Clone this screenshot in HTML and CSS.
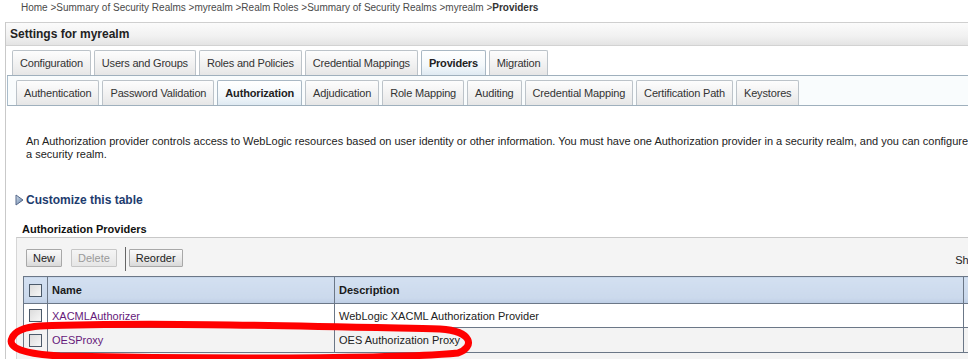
FILE: index.html
```html
<!DOCTYPE html>
<html lang="en">
<head>
    <meta charset="UTF-8">
    <title>Settings for myrealm - Providers</title>
    <link rel="stylesheet" href="styles.css">
</head>
<body>
    <div class="page">
        <div class="breadcrumb">
            Home &gt;Summary of Security Realms &gt;myrealm &gt;Realm Roles &gt;Summary of Security Realms &gt;myrealm &gt;<b>Providers</b>
        </div>

        <div class="panel">
            <div class="panel-title">Settings for myrealm</div>

            <div class="tabs tabs-main">
                <span class="tab">Configuration</span>
                <span class="tab">Users and Groups</span>
                <span class="tab">Roles and Policies</span>
                <span class="tab">Credential Mappings</span>
                <span class="tab active">Providers</span>
                <span class="tab">Migration</span>
            </div>
            <div class="tabs tabs-sub">
                <span class="tab">Authentication</span>
                <span class="tab">Password Validation</span>
                <span class="tab active">Authorization</span>
                <span class="tab">Adjudication</span>
                <span class="tab">Role Mapping</span>
                <span class="tab">Auditing</span>
                <span class="tab">Credential Mapping</span>
                <span class="tab">Certification Path</span>
                <span class="tab">Keystores</span>
            </div>

            <div class="panel-body">
                <p class="intro">
                    An Authorization provider controls access to WebLogic resources based on user identity or other information. You must have one Authorization provider in a security realm, and you can configure multiple Authorization providers in<br>
                    a security realm.
                </p>

                <a class="customize" href="#">
                    <svg width="9" height="12" viewBox="0 0 9 12">
                        <defs>
                            <linearGradient id="tri" x1="0" y1="0" x2="1" y2="1">
                                <stop offset="0" stop-color="#d8e2ee"/>
                                <stop offset="1" stop-color="#5b7aa3"/>
                            </linearGradient>
                        </defs>
                        <polygon points="1,1 8,6 1,11" fill="url(#tri)" stroke="#56698a" stroke-width="1"/>
                    </svg>
                    Customize this table
                </a>

                <h3 class="table-title">Authorization Providers</h3>

                <div class="table-box">
                    <div class="toolbar">
                        <button class="btn">New</button>
                        <button class="btn" disabled>Delete</button>
                        <span class="sep"></span>
                        <button class="btn">Reorder</button>
                        <span class="paging">Showing 1 to 2 of 2 &nbsp; Previous | Next</span>
                    </div>

                    <table class="grid">
                        <colgroup>
                            <col class="col-check">
                            <col class="col-name">
                            <col class="col-desc">
                            <col class="col-version">
                        </colgroup>
                        <thead>
                            <tr>
                                <th class="check"><span class="box"></span></th>
                                <th>Name</th>
                                <th>Description</th>
                                <th>Version</th>
                            </tr>
                        </thead>
                        <tbody>
                            <tr>
                                <td class="check"><span class="box"></span></td>
                                <td><a href="#">XACMLAuthorizer</a></td>
                                <td>WebLogic XACML Authorization Provider</td>
                                <td>1.0</td>
                            </tr>
                            <tr class="alt">
                                <td class="check"><span class="box"></span></td>
                                <td><a href="#">OESProxy</a></td>
                                <td>OES Authorization Proxy</td>
                                <td>1.0</td>
                            </tr>
                        </tbody>
                    </table>
                </div>
            </div>
        </div>

        <!-- hand drawn marker around the OESProxy row -->
        <svg class="scribble" width="968" height="359" viewBox="0 0 968 359">
            <path d="M 40 326 C 150 322, 300 326, 440 329 C 473 331, 475 347, 458 353 C 400 359, 200 359, 60 356 C 24 354, 7 348, 12 338 C 15 331, 25 327, 40 326 Z"
                  fill="none" stroke="#ff0000" stroke-width="7" stroke-linejoin="round"/>
        </svg>
    </div>
</body>
</html>
```

FILE: styles.css
```css
html, body {
    margin: 0;
    overflow: hidden;
}
body {
    font-family: "Liberation Sans", Arial, sans-serif;
    font-size: 11px;
    color: #222;
    background: #fff;
}
.page {
    position: relative;
    width: 1240px;
    height: 359px;
}

.breadcrumb {
    height: 15px;
    line-height: 15px;
    padding-left: 21px;
    margin-bottom: 7px;
    font-size: 10px;
    color: #4a4a4a;
}
.breadcrumb b {
    color: #333;
}

.panel {
    margin-left: 5px;
    border-left: 1px solid #c9c9c9;
    height: 337px;
}
.panel-title {
    height: 22px;
    line-height: 22px;
    padding-left: 4px;
    border-top: 1px solid #cfcfcf;
    border-bottom: 1px solid #d2d2d2;
    background: linear-gradient(#fbfbfb, #f1f1f1 60%, #e4e4e4);
    font-size: 12px;
    font-weight: bold;
    color: #222;
}

.tabs {
    display: flex;
    gap: 3px;
    margin-left: 1px;
    border-bottom: 1px solid #9fb0bd;
    letter-spacing: -0.2px;
}
.tabs-main {
    padding: 4px 0 0 5px;
}
.tabs-sub {
    padding: 4px 0 0 8px;
    border-left: 1px solid #a9bccb;
    background: #f9fcfd;
    letter-spacing: -0.16px;
}
.tab {
    height: 24px;
    line-height: 24px;
    padding: 0 7px;
    border: 1px solid #bcc3c9;
    border-bottom: none;
    border-radius: 2px 2px 0 0;
    background: linear-gradient(#fdfdfd, #eeeeee 70%, #e6e6e6);
    color: #333;
    white-space: nowrap;
}
.tab.active {
    font-weight: bold;
    color: #222;
    background: linear-gradient(#ffffff, #f3f8fb 60%, #dfeaf2);
    border-color: #a9b8c4;
}

.panel-body {
    padding-left: 10px;
}
.intro {
    margin: 29px 0 0;
    padding-left: 10px;
    line-height: 13px;
    color: #222;
    white-space: nowrap;
}
.customize {
    display: flex;
    align-items: center;
    gap: 2px;
    margin: 31px 0 0 -1px;
    height: 16px;
    font-size: 12px;
    font-weight: bold;
    color: #1e3c6e;
    text-decoration: none;
}
.table-title {
    margin: 14px 0 1px;
    padding-left: 6px;
    height: 14px;
    line-height: 14px;
    font-size: 11px;
    font-weight: bold;
    color: #111;
}

.table-box {
    width: 1110px;
    padding: 0 6px 20px;
    border-top: 1px solid #c8c8c8;
    border-left: 1px solid #d6d6d6;
    background: #f4f4f4;
}
.toolbar {
    display: flex;
    align-items: center;
    height: 36px;
    padding: 2px 0 0 3px;
}
.btn {
    height: 18px;
    padding: 0 6px;
    margin-right: 9px;
    font-family: inherit;
    font-size: 11px;
    color: #222;
    border: 1px solid #a8a8a8;
    border-radius: 1px;
    background: linear-gradient(#fafafa, #e9e9e9 60%, #d9d9d9);
}
.btn:disabled {
    color: #9a9a9a;
    border-color: #c6c6c6;
    background: linear-gradient(#f5f5f5, #e6e6e6);
    margin-right: 8px;
}
.sep {
    width: 1px;
    height: 24px;
    background: #666;
    margin: 2px 3px 0 0;
}
.paging {
    margin-left: auto;
    margin-top: 3px;
    color: #222;
}

.grid {
    width: 1110px;
    border-collapse: collapse;
    table-layout: fixed;
    background: #fff;
}
.col-check { width: 24px; }
.col-name { width: 287px; }
.col-desc { width: 629px; }
.grid th,
.grid td {
    border: 1px solid #6b7787;
    padding: 0 4px;
    text-align: left;
    white-space: nowrap;
    overflow: hidden;
}
.grid th {
    height: 26px;
    background: linear-gradient(#d3e0f1, #cbd9ec 80%, #bccde4);
    font-weight: bold;
    color: #1a1a1a;
}
.grid td {
    height: 23px;
    color: #222;
}
.grid tr.alt td {
    height: 24px;
    background: #f3f3f3;
}
.grid a {
    color: #66197a;
    text-decoration: none;
}
.grid .check {
    padding: 0;
    text-align: center;
}
.box {
    display: inline-block;
    width: 11px;
    height: 11px;
    vertical-align: middle;
    border: 1px solid #4c5a6a;
    background: linear-gradient(135deg, #dcdcdc, #f7f7f7);
}

.scribble {
    position: absolute;
    top: 0;
    left: 0;
    pointer-events: none;
}
```
